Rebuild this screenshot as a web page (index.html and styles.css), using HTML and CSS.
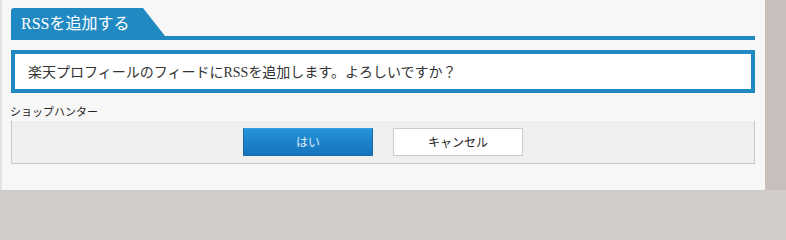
FILE: index.html
```html
<!DOCTYPE html>
<html lang="ja">
<head>
<meta charset="utf-8">
<title>RSSを追加する</title>
<link rel="stylesheet" href="styles.css">
</head>
<body>
<div class="page">
  <div class="dialog">
    <div class="header">
      <div class="tab"><span class="latin">RSS</span>を追加する</div>
      <div class="bar"></div>
    </div>
    <div class="message">楽天プロフィールのフィードに<span class="latin">RSS</span>を追加します。よろしいですか？</div>
    <div class="label">ショップハンター</div>
    <div class="actions">
      <button class="btn btn-primary">はい</button>
      <button class="btn btn-secondary">キャンセル</button>
    </div>
  </div>
  <div class="side"></div>
</div>
</body>
</html>
```

FILE: styles.css
```css
html, body {
  margin: 0;
  padding: 0;
}
body {
  width: 786px;
  height: 205px;
  background: #d0ccca;
  overflow: hidden;
  font-family: "Noto Sans CJK JP", sans-serif;
}
.latin {
  font-family: "Liberation Serif", "Times New Roman", serif;
}
.page {
  display: flex;
  align-items: flex-start;
}
.dialog {
  box-sizing: border-box;
  width: 765px;
  height: 190px;
  background: #f7f7f7;
  border-left: 2px solid #e3e3e3;
  padding: 8px 10px 0 9px;
}
.side {
  width: 21px;
  height: 190px;
  background: #c6bfbb;
}
.header {
  display: flex;
  flex-direction: column;
}
.tab {
  box-sizing: border-box;
  width: 154px;
  height: 28px;
  padding-left: 10px;
  background: #2189c2;
  color: #ffffff;
  font-size: 16px;
  line-height: 29px;
  border-top-left-radius: 3px;
  clip-path: polygon(0 0, 132px 0, 154px 100%, 0 100%);
}
.bar {
  height: 4px;
  background: #2189c2;
}
.message {
  box-sizing: border-box;
  margin-top: 10px;
  height: 43px;
  border: 4px solid #2189c2;
  background: #ffffff;
  padding-left: 13px;
  font-size: 14px;
  line-height: 35px;
  color: #333333;
}
.label {
  margin-top: 9px;
  height: 18px;
  font-size: 11px;
  line-height: 18px;
  color: #222222;
  margin-left: -1px;
}
.actions {
  box-sizing: border-box;
  height: 44px;
  background: #efefef;
  border: 1px solid #c9c9c9;
  border-top-color: #fbfbfb;
  display: flex;
  justify-content: center;
  align-items: center;
  gap: 20px;
}
.btn {
  box-sizing: border-box;
  width: 130px;
  height: 28px;
  padding: 0;
  font-family: "Noto Sans CJK JP", sans-serif;
  font-size: 12px;
  line-height: 26px;
  cursor: pointer;
}
.btn-primary {
  background: linear-gradient(#2493d9, #1673bd);
  border: 1px solid #1b6aa8;
  border-top-color: #3a9de0;
  color: #dde9f5;
}
.btn-secondary {
  background: #ffffff;
  border: 1px solid #cccccc;
  color: #222222;
}
```
